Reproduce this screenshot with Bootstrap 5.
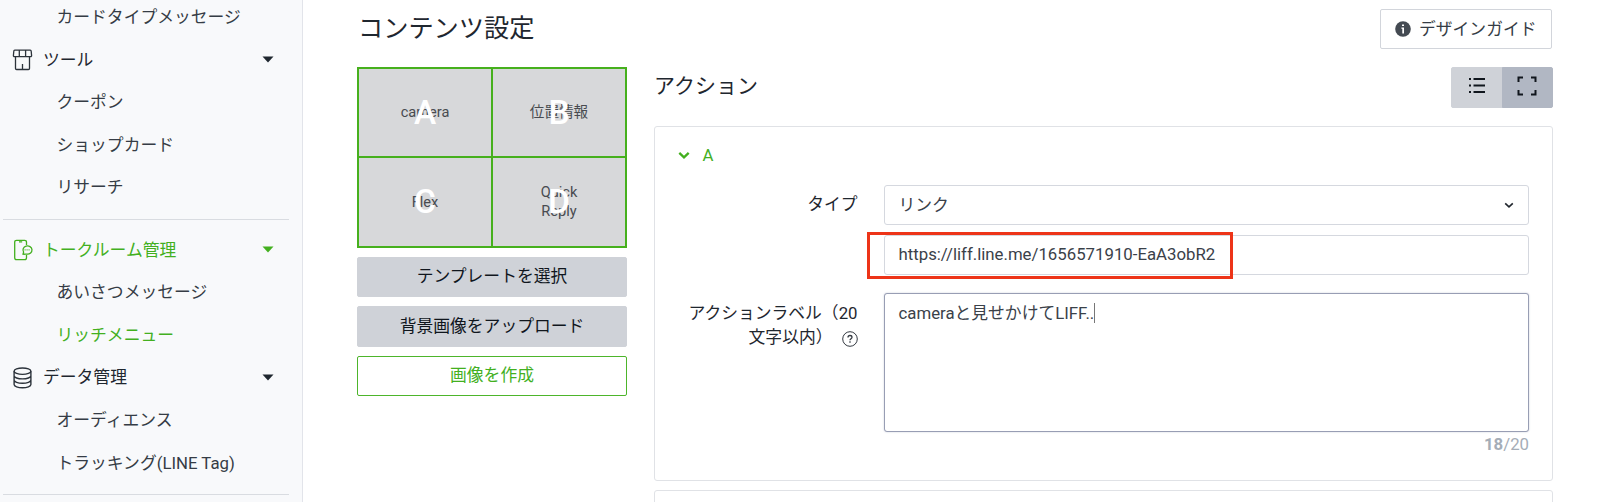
<!DOCTYPE html>
<html lang="ja">
<head>
<meta charset="utf-8">
<meta name="viewport" content="width=device-width, initial-scale=1">
<title>コンテンツ設定</title>
<link href="https://cdn.jsdelivr.net/npm/bootstrap@5.3.0/dist/css/bootstrap.min.css" rel="stylesheet">
<style>
:root{--green:#43b01f;--ink:#1f272f;--line:#d5d8df}
body{font:16.8px/24.4px Roboto,"Noto Sans CJK JP",sans-serif;color:var(--ink);height:502px;overflow:hidden;background:#fff}
.side{width:303px;height:502px;background:#f8f9fb;border-right:1px solid #e2e4ea;overflow:hidden}
.side-list{margin-top:-4px}
.side .nav-link{height:42.6px;padding:0 0 0 56.5px;color:#353c45;display:flex;align-items:center}
.side .group-link{padding:0 28px 0 12px;color:var(--ink)}
.side .group-link svg:first-child{margin-right:10px}
.side .nav-link.active{color:var(--green)}
.side hr{margin:10px 13px 8.6px 3px;border-top:1px solid #d9dce1;opacity:1}
.main-area{padding:9px 48px 0 54px;height:502px;overflow:hidden}
.page-title{font-size:25.2px;line-height:36px;font-weight:400;margin:1.6px 0 0 1px}
.sub-title{font-size:21px;line-height:30px;font-weight:400;margin-top:4px}
.head-row{height:58px}
.btn{--bs-btn-border-radius:2px;font-size:16.8px;line-height:24px;padding:6px 15px 8px;height:40.4px}
.btn-guide{--bs-btn-border-color:#d2d5db;--bs-btn-color:#353c45;width:172px;padding:5px 14px 6px}
.btn-guide svg{flex:none}
.btn-gray{--bs-btn-bg:#cfd2d8;--bs-btn-border-color:#cfd2d8;--bs-btn-color:#10161d}
.btn-make{--bs-btn-border-color:#4db52b;--bs-btn-color:var(--green);--bs-btn-bg:#fff}
.left-col{width:270px;gap:9px}
.tiles{height:181px;display:grid;grid-template-columns:1fr 1fr;grid-template-rows:87px 88px;gap:2px;padding:2px;background:#46b01d}
.tile{background:#d7d8da;color:#484b50;font-size:14.6px;line-height:19px;display:grid;place-items:center;text-align:center}
.tile>*{grid-area:1/1}
.tile b{font-weight:500;font-size:33.5px;line-height:40px;color:#fff}
.right-col{margin-left:27px}
.panel{border:1px solid #e0e2e6;border-radius:3px}
.panel-a{height:355px;margin-top:17.8px;padding:15.4px 23px 0}
.panel-next{height:60px;margin-top:9.6px}
.toggle-a{color:var(--green);height:26px;font-size:16.8px}
.toggle-a svg{margin-right:12.5px}
.type-row{margin-top:16.6px}
.label-row{margin-top:18px}
.url-row{margin-top:9.4px}
.field-label{width:179.5px;text-align:right;flex:none;padding-top:7.6px}
.help-icon{margin-left:9px}
.form-control{border-color:var(--line);border-radius:3px;font-size:16.8px;line-height:24.4px;color:#3a4149;padding:6.2px 14px;height:40.6px}
.fields{width:645.5px;margin-left:26px;flex:none}
.area{height:139px;border-color:#989eb4;box-shadow:0 0 2px #c9ccd8}
.mark-box{position:absolute;left:-17px;top:-3px;width:366px;height:47px;border:3.5px solid #ed3418}
.caret{display:inline-block;width:1px;height:20px;background:#777;vertical-align:-4px}
.counter{color:#a5adb7;line-height:24px}
.view-btns .btn{width:51.5px;padding:0 0 3px;height:41px;display:flex;align-items:center;justify-content:center}
.view-btns .chosen{--bs-btn-bg:#b1b7c3;--bs-btn-border-color:#b1b7c3}
</style>
</head>
<body class="d-flex">
<nav class="side flex-shrink-0">
  <div class="side-list nav flex-column flex-nowrap">
    <a class="nav-link">カードタイプメッセージ</a>
    <a class="nav-link group-link">
      <svg width="21" height="22" viewBox="0 0 21 22" fill="none" stroke="#2c333b" stroke-width="1.3"><path d="M2.8 1.2h15.4c.6 0 1 .4 1 1l.4 4.300a1 1 0 0 1-1 1.100H2.400a1 1 0 0 1-1-1.100l.4-4.300c0-.6.4-1 1-1zM7.300 1.200v6.400M13.600 1.200v6.400M3.500 7.600v11.800c0 .7.4 1.100 1.100 1.100h11.800c.7 0 1.100-.4 1.100-1.100V7.600M10.500 15v5.400"/></svg>
      <span class="me-auto">ツール</span>
      <svg width="12" height="7" viewBox="0 0 12 7"><path d="M.5.5h11L6 6.500z" fill="#1f272f"/></svg>
    </a>
    <a class="nav-link">クーポン</a>
    <a class="nav-link">ショップカード</a>
    <a class="nav-link">リサーチ</a>
    <hr>
    <a class="nav-link group-link active">
      <svg width="21" height="22" viewBox="0 0 21 22" fill="none" stroke="#43b01f" stroke-width="1.3"><path d="M14.500 6V3.200c0-1.200-.7-1.900-1.900-1.900H4.600c-1.200 0-1.900.7-1.900 1.900v15.600c0 1.200.7 1.900 1.900 1.900h8c1.200 0 1.900-.7 1.900-1.900V16M7 2.900h3.200"/><path d="M11 15.200l.6-2.100a4.500 4.100 0 1 1 3.300 2c-1.300 0-2.600.3-3.900.1z"/><path d="M12.500 10.900h5.200" stroke-width="1" stroke-dasharray="1.200 .8"/></svg>
      <span class="me-auto">トークルーム管理</span>
      <svg width="12" height="7" viewBox="0 0 12 7"><path d="M.5.5h11L6 6.500z" fill="#43b01f"/></svg>
    </a>
    <a class="nav-link">あいさつメッセージ</a>
    <a class="nav-link active">リッチメニュー</a>
    <a class="nav-link group-link">
      <svg width="21" height="22" viewBox="0 0 21 22" fill="none" stroke="#2c333b" stroke-width="1.400"><ellipse cx="10.500" cy="4.200" rx="8.400" ry="3.200"/><path d="M2.100 4.200v13.400c0 1.800 3.800 3.200 8.400 3.200s8.400-1.400 8.400-3.200V4.200M2.100 8.700c0 1.800 3.800 3.200 8.400 3.200s8.400-1.400 8.400-3.200M2.100 13.100c0 1.800 3.800 3.200 8.400 3.200s8.400-1.400 8.400-3.200"/></svg>
      <span class="me-auto">データ管理</span>
      <svg width="12" height="7" viewBox="0 0 12 7"><path d="M.5.5h11L6 6.500z" fill="#1f272f"/></svg>
    </a>
    <a class="nav-link">オーディエンス</a>
    <a class="nav-link">トラッキング(LINE Tag)</a>
    <hr>
  </div>
</nav>

<main class="main-area flex-grow-1">
  <div class="head-row d-flex justify-content-between align-items-start">
    <h1 class="page-title">コンテンツ設定</h1>
    <button class="btn btn-guide d-flex align-items-center">
      <svg width="16" height="16" viewBox="0 0 16 16"><circle cx="8" cy="8" r="7.800" fill="#444a52"/><path d="M7 3.500h2v1.600H7zM6.400 6.500H9v5.900H7.300V7.800h-.9z" fill="#fff"/></svg>
      <span class="text-nowrap ms-2">デザインガイド</span>
    </button>
  </div>

  <div class="d-flex align-items-start">
    <section class="left-col d-flex flex-column flex-shrink-0">
      <div class="tiles">
        <div class="tile"><span>camera</span><b>A</b></div>
        <div class="tile"><span>位置情報</span><b>B</b></div>
        <div class="tile"><span>Flex</span><b>C</b></div>
        <div class="tile"><span>Quick<br>Reply</span><b>D</b></div>
      </div>
      <button class="btn btn-gray">テンプレートを選択</button>
      <button class="btn btn-gray">背景画像をアップロード</button>
      <button class="btn btn-make">画像を作成</button>
    </section>

    <section class="right-col flex-grow-1">
      <div class="d-flex justify-content-between align-items-start">
        <h2 class="sub-title mb-0">アクション</h2>
        <div class="btn-group view-btns">
          <button class="btn btn-gray" aria-label="list"><svg width="18" height="18" viewBox="0 0 18 18" stroke="#10161d" stroke-width="2"><path d="M1 2h2M5.500 2H17M1 8.500h2M5.500 8.500H17M1 15h2M5.500 15H17"/></svg></button>
          <button class="btn btn-gray chosen" aria-label="expand"><svg width="20" height="20" viewBox="0 0 20 20" fill="none" stroke="#10161d" stroke-width="2"><path d="M1.500 6V1.500H6M14 1.500h4.500V6M18.500 14v4.500H14M6 18.500H1.500V14"/></svg></button>
        </div>
      </div>

      <div class="panel panel-a">
        <div class="toggle-a d-flex align-items-center"><svg width="12" height="9" viewBox="0 0 12 9" fill="none" stroke="#43b01f" stroke-width="2.300"><path d="M1.300 1.800L6 6.300l4.700-4.500"/></svg><span>A</span></div>
        <div class="d-flex type-row">
          <div class="field-label">タイプ</div>
          <div class="fields">
            <div class="form-control d-flex justify-content-between align-items-center"><span>リンク</span><svg width="10" height="7" viewBox="0 0 10 7" fill="none" stroke="#20262d" stroke-width="1.600"><path d="M1.200 1.300L5 4.900l3.800-3.600"/></svg></div>
            <div class="position-relative url-row">
              <div class="form-control">https://liff.line.me/1656571910-EaA3obR2</div>
              <div class="mark-box"></div>
            </div>
          </div>
        </div>
        <div class="d-flex label-row">
          <div class="field-label">アクションラベル（20<br>文字以内）<svg class="help-icon" width="16" height="16" viewBox="0 0 16 16" fill="none" stroke="#343a42"><circle cx="8" cy="8" r="7.300"/><path d="M6 6.500c0-1.300.9-2 2-2s2 .7 2 1.800c0 1.300-2 1.500-2 3M8 10.300v1.500" stroke-width="1.300"/></svg></div>
          <div class="fields">
            <div class="form-control area">cameraと見せかけてLIFF..<span class="caret"></span></div>
            <div class="counter text-end"><strong>18</strong>/20</div>
          </div>
        </div>
      </div>
      <div class="panel panel-next"></div>
    </section>
  </div>
</main>
<script src="https://cdn.jsdelivr.net/npm/bootstrap@5.3.0/dist/js/bootstrap.bundle.min.js"></script>
</body>
</html>
